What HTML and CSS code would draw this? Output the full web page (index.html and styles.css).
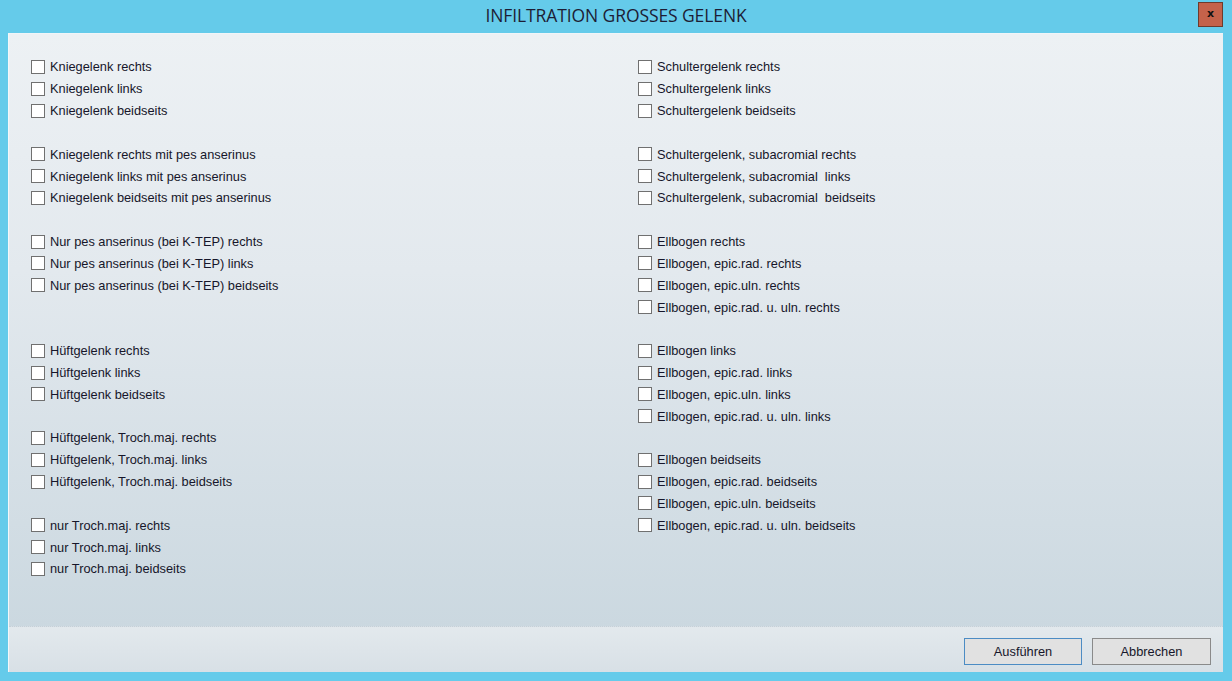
FILE: index.html
```html
<!DOCTYPE html>
<html lang="de">
<head>
<meta charset="utf-8">
<title>INFILTRATION GROSSES GELENK</title>
<link rel="stylesheet" href="styles.css">
</head>
<body>
<div class="window">
  <div class="titlebar">
    <div class="title">INFILTRATION GROSSES GELENK</div>
    <div class="close">x</div>
  </div>
  <div class="client">
    <div class="main">
      <div class="col">
        <div class="group">
          <label class="row"><span class="box"></span>Kniegelenk rechts</label>
          <label class="row"><span class="box"></span>Kniegelenk links</label>
          <label class="row"><span class="box"></span>Kniegelenk beidseits</label>
        </div>
        <div class="group">
          <label class="row"><span class="box"></span>Kniegelenk rechts mit pes anserinus</label>
          <label class="row"><span class="box"></span>Kniegelenk links mit pes anserinus</label>
          <label class="row"><span class="box"></span>Kniegelenk beidseits mit pes anserinus</label>
        </div>
        <div class="group wide">
          <label class="row"><span class="box"></span>Nur pes anserinus (bei K-TEP) rechts</label>
          <label class="row"><span class="box"></span>Nur pes anserinus (bei K-TEP) links</label>
          <label class="row"><span class="box"></span>Nur pes anserinus (bei K-TEP) beidseits</label>
        </div>
        <div class="group">
          <label class="row"><span class="box"></span>Hüftgelenk rechts</label>
          <label class="row"><span class="box"></span>Hüftgelenk links</label>
          <label class="row"><span class="box"></span>Hüftgelenk beidseits</label>
        </div>
        <div class="group">
          <label class="row"><span class="box"></span>Hüftgelenk, Troch.maj. rechts</label>
          <label class="row"><span class="box"></span>Hüftgelenk, Troch.maj. links</label>
          <label class="row"><span class="box"></span>Hüftgelenk, Troch.maj. beidseits</label>
        </div>
        <div class="group">
          <label class="row"><span class="box"></span>nur Troch.maj. rechts</label>
          <label class="row"><span class="box"></span>nur Troch.maj. links</label>
          <label class="row"><span class="box"></span>nur Troch.maj. beidseits</label>
        </div>
      </div>
      <div class="col">
        <div class="group">
          <label class="row"><span class="box"></span>Schultergelenk rechts</label>
          <label class="row"><span class="box"></span>Schultergelenk links</label>
          <label class="row"><span class="box"></span>Schultergelenk beidseits</label>
        </div>
        <div class="group">
          <label class="row"><span class="box"></span>Schultergelenk, subacromial rechts</label>
          <label class="row"><span class="box"></span>Schultergelenk, subacromial&nbsp; links</label>
          <label class="row"><span class="box"></span>Schultergelenk, subacromial&nbsp; beidseits</label>
        </div>
        <div class="group">
          <label class="row"><span class="box"></span>Ellbogen rechts</label>
          <label class="row"><span class="box"></span>Ellbogen, epic.rad. rechts</label>
          <label class="row"><span class="box"></span>Ellbogen, epic.uln. rechts</label>
          <label class="row"><span class="box"></span>Ellbogen, epic.rad. u. uln. rechts</label>
        </div>
        <div class="group">
          <label class="row"><span class="box"></span>Ellbogen links</label>
          <label class="row"><span class="box"></span>Ellbogen, epic.rad. links</label>
          <label class="row"><span class="box"></span>Ellbogen, epic.uln. links</label>
          <label class="row"><span class="box"></span>Ellbogen, epic.rad. u. uln. links</label>
        </div>
        <div class="group">
          <label class="row"><span class="box"></span>Ellbogen beidseits</label>
          <label class="row"><span class="box"></span>Ellbogen, epic.rad. beidseits</label>
          <label class="row"><span class="box"></span>Ellbogen, epic.uln. beidseits</label>
          <label class="row"><span class="box"></span>Ellbogen, epic.rad. u. uln. beidseits</label>
        </div>
      </div>
    </div>
    <div class="footer">
      <button class="btn default" type="button">Ausführen</button>
      <button class="btn" type="button">Abbrechen</button>
    </div>
  </div>
</div>
</body>
</html>
```

FILE: styles.css
```css
html, body {
  margin: 0;
  padding: 0;
}
body {
  width: 1232px;
  height: 681px;
  overflow: hidden;
  background: #65cbea;
  font-family: "Liberation Sans", Arial, sans-serif;
}
.window {
  display: flex;
  flex-direction: column;
  height: 681px;
}
.titlebar {
  height: 33px;
  display: flex;
  align-items: flex-start;
  justify-content: center;
  position: relative;
}
.title {
  font-family: "Open Sans", "Noto Sans", sans-serif;
  font-size: 17.5px;
  line-height: 30px;
  color: #1d1d35;
  letter-spacing: -0.1px;
}
.close {
  position: absolute;
  top: 2px;
  right: 9px;
  width: 23px;
  height: 23px;
  border: 1px solid #6e3a2c;
  background: #c4624a;
  color: #111;
  font-family: "DejaVu Sans", sans-serif;
  font-weight: bold;
  font-size: 11px;
  line-height: 22px;
  text-align: center;
}
.client {
  flex: 1;
  margin: 0 9px 9px 8px;
  display: flex;
  flex-direction: column;
  border-left: 1px solid #f4f7f9;
  border-top: 1px solid #f1f5f8;
}
.main {
  flex: 1;
  display: flex;
  padding: 22px 0 0 22px;
  background: linear-gradient(to bottom, #edf1f4 0%, #e3e9ee 40%, #cbd8e0 100%);
}
.col {
  display: flex;
  flex-direction: column;
  gap: 21.83px;
}
.col:first-child {
  width: 607px;
}
.group {
  display: flex;
  flex-direction: column;
}
.group.wide {
  margin-bottom: 21.83px;
}
.row {
  height: 21.83px;
  display: flex;
  align-items: center;
  font-size: 12.8px;
  color: #16162a;
  white-space: pre;
}
.box {
  width: 12px;
  height: 12px;
  border: 1px solid #707070;
  background: #ffffff;
  margin-right: 5px;
  flex: none;
}
.footer {
  height: 46px;
  display: flex;
  justify-content: flex-end;
  align-items: center;
  gap: 10px;
  padding: 3px 12px 0 0;
  box-sizing: border-box;
  border-top: 1px dotted #c5d0d8;
  background: linear-gradient(to bottom, #e3e9ed 0%, #d8e0e6 100%);
}
.btn {
  width: 119px;
  height: 27px;
  margin: 0;
  padding: 0;
  box-sizing: border-box;
  background: #e1e1e1;
  border: 1px solid #8a8a8a;
  font-family: "Liberation Sans", Arial, sans-serif;
  font-size: 12.8px;
  color: #16162a;
}
.btn.default {
  width: 118px;
  border-color: #4c8cc4;
}
```
